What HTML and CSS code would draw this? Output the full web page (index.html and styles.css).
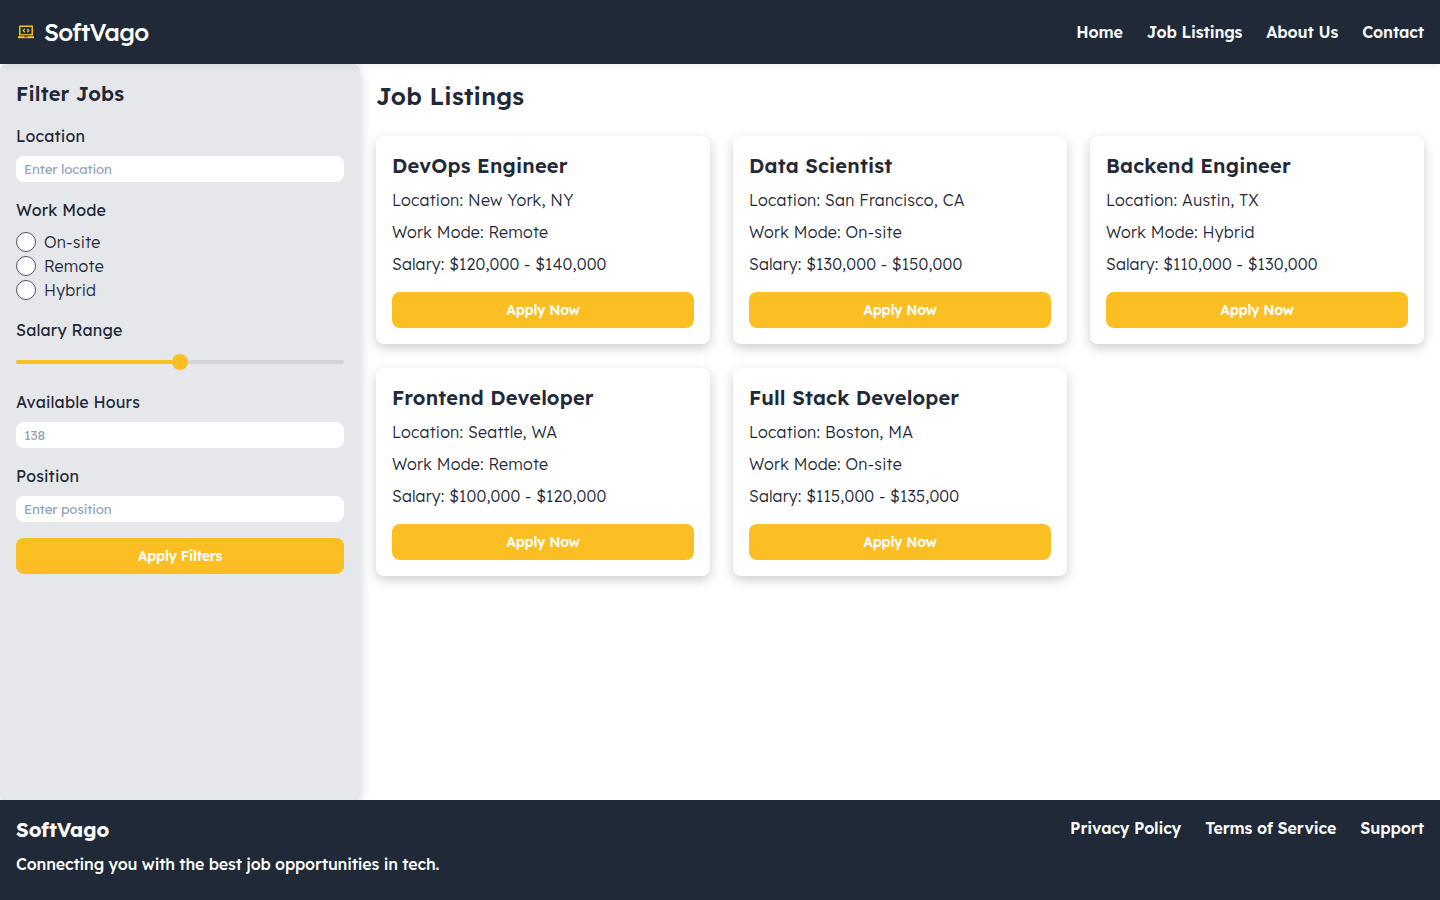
FILE: index.html
```html
<!DOCTYPE html>
<html lang="en">
<head>
<meta charset="utf-8">
<title>SoftVago</title>
<link rel="stylesheet" href="styles.css">
</head>
<body>
<header class="header">
  <div class="brand">
    <svg class="brand-icon" viewBox="0 0 20 20" fill="none" stroke="#fbbf24">
      <path d="M3.8 13.5V4.3h12.4v9.2" stroke-width="1.5" stroke-linejoin="round"/>
      <path d="M3.8 12.7h12.4" stroke-width="1.2"/>
      <path d="M2 15.2h16" stroke-width="2"/>
      <path d="M8.8 6.9L7.2 8.6l1.6 1.7M11.2 6.9l1.6 1.7-1.6 1.7" stroke-width="1.3"/>
      <path d="M8.3 14.8h3.4" stroke="#1f2937" stroke-width=".9"/>
    </svg>
    <span class="brand-name">SoftVago</span>
  </div>
  <nav class="nav"><a>Home</a><a>Job Listings</a><a>About Us</a><a>Contact</a></nav>
</header>
<div class="content">
  <aside class="sidebar">
    <h2 class="filter-title">Filter Jobs</h2>
    <label class="label">Location</label>
    <input class="input" type="text" placeholder="Enter location">
    <label class="label">Work Mode</label>
    <div class="radios">
      <label class="radio"><i class="dot"></i><span>On-site</span></label>
      <label class="radio"><i class="dot"></i><span>Remote</span></label>
      <label class="radio"><i class="dot"></i><span>Hybrid</span></label>
    </div>
    <label class="label">Salary Range</label>
    <div class="slider"><div class="track"><div class="fill"></div><div class="thumb"></div></div></div>
    <label class="label">Available Hours</label>
    <input class="input" type="text" placeholder="138">
    <label class="label">Position</label>
    <input class="input" type="text" placeholder="Enter position">
    <button class="button">Apply Filters</button>
  </aside>
  <main class="main">
    <h1 class="title">Job Listings</h1>
    <div class="grid">
      <article class="card"><h3>DevOps Engineer</h3><p>Location: New York, NY</p><p>Work Mode: Remote</p><p class="salary">Salary: $120,000 - $140,000</p><button class="button">Apply Now</button></article>
      <article class="card"><h3>Data Scientist</h3><p>Location: San Francisco, CA</p><p>Work Mode: On-site</p><p class="salary">Salary: $130,000 - $150,000</p><button class="button">Apply Now</button></article>
      <article class="card"><h3>Backend Engineer</h3><p>Location: Austin, TX</p><p>Work Mode: Hybrid</p><p class="salary">Salary: $110,000 - $130,000</p><button class="button">Apply Now</button></article>
      <article class="card"><h3>Frontend Developer</h3><p>Location: Seattle, WA</p><p>Work Mode: Remote</p><p class="salary">Salary: $100,000 - $120,000</p><button class="button">Apply Now</button></article>
      <article class="card"><h3>Full Stack Developer</h3><p>Location: Boston, MA</p><p>Work Mode: On-site</p><p class="salary">Salary: $115,000 - $135,000</p><button class="button">Apply Now</button></article>
    </div>
  </main>
</div>
<footer class="footer">
  <div><h2 class="footer-title">SoftVago</h2><p class="tagline">Connecting you with the best job opportunities in tech.</p></div>
  <nav class="nav footer-nav"><a>Privacy Policy</a><a>Terms of Service</a><a>Support</a></nav>
</footer>
</body>
</html>
```
FILE: styles.css
```css
* { box-sizing: border-box; margin: 0; padding: 0; }
body { height: 900px; display: flex; flex-direction: column; overflow: hidden; background: #fff; color: #1f2937; font: 16px/24px Lexend, Inter, sans-serif; }
.header { flex: none; height: 64px; padding: 0 16px; display: flex; align-items: center; justify-content: space-between; background: #1f2937; color: #fff; position: relative; box-shadow: 0 4px 6px rgba(0,0,0,.05); }
.brand { display: flex; align-items: center; gap: 8px; }
.brand-icon { width: 20px; height: 20px; }
.brand-name { font-size: 24px; line-height: 32px; font-weight: 500; letter-spacing: -.72px; }
.nav { display: flex; gap: 24px; font-weight: 600; letter-spacing: -.13px; color: #f9fafb; white-space: nowrap; }
.footer-nav { letter-spacing: -.15px; }
.content { flex: 1; display: flex; min-height: 0; }
.sidebar { flex: none; width: 360px; padding: 16px; background: #e5e7eb; border-radius: 8px; box-shadow: 0 4px 12px rgba(0,0,0,.2); }
.filter-title { font-size: 20px; line-height: 28px; font-weight: 600; margin-bottom: 16px; letter-spacing: .2px; }
.label { display: block; margin-bottom: 8px; font-weight: 400; letter-spacing: .17px; }
.input { display: block; width: 100%; height: 26px; border: 0; border-radius: 8px; padding: 0 8px; margin-bottom: 16px; background: #fff; font: 13.33px Lexend, Inter, sans-serif; letter-spacing: -.16px; }
.input::placeholder { color: #94a3b8; opacity: 1; }
.radios { margin-bottom: 16px; }
.radio { display: flex; align-items: center; gap: 8px; height: 24px; letter-spacing: .25px; font-weight: 300; }
.dot { width: 20px; height: 20px; border: 1px solid #4b5563; border-radius: 50%; background: #fff; }
.slider { height: 24px; margin-bottom: 16px; display: flex; align-items: center; }
.track { position: relative; width: 100%; height: 4px; border-radius: 2px; background: #d1d5db; }
.fill { width: 50%; height: 4px; border-radius: 2px; background: #fbbf24; }
.thumb { position: absolute; left: 50%; top: 50%; width: 16px; height: 16px; border-radius: 50%; background: #fbbf24; transform: translate(-50%, -50%); }
.button { display: block; width: 100%; height: 36px; border: 0; border-radius: 8px; background: #fbbf24; color: #fff; font: 600 14px Lexend, Inter, sans-serif; letter-spacing: -.28px; }
.main { flex: 1; padding: 16px; }
.title { font-size: 24px; line-height: 32px; font-weight: 600; margin-bottom: 24px; letter-spacing: .22px; }
.grid { display: grid; grid-template-columns: repeat(3, 1fr); gap: 24px 23px; }
.card { padding: 16px; height: 208px; border-radius: 8px; background: #fff; box-shadow: 0 4px 12px rgba(0,0,0,.2); }
.card h3 { font-size: 20px; line-height: 28px; font-weight: 600; margin-bottom: 8px; letter-spacing: .19px; }
.card p { margin-bottom: 8px; letter-spacing: .22px; font-weight: 300; white-space: nowrap; }
.card .salary { letter-spacing: .16px; }
.card .button { margin-top: 16px; }
.footer { flex: none; height: 100px; padding: 16px; display: flex; justify-content: space-between; background: #1f2937; color: #fff; position: relative; }
.footer-title { font-size: 20px; line-height: 28px; font-weight: 700; margin-bottom: 8px; }
.tagline { font-weight: 500; letter-spacing: -.16px; }
```
